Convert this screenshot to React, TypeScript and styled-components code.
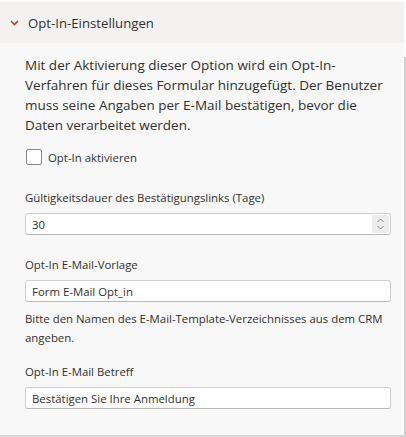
import React, { useState } from 'react';
import styled, { createGlobalStyle } from 'styled-components';

const GlobalStyle = createGlobalStyle`
  html, body {
    margin: 0;
    padding: 0;
    background: #ffffff;
  }
  body {
    font-family: "Open Sans", "Noto Sans", sans-serif;
    color: #323130;
  }
`;

const Panel = styled.div`
  width: 406px;
  height: 437px;
  padding-top: 2px;
  box-sizing: border-box;
  background: #fbfbfb;
  display: flex;
  flex-direction: column;
`;

const Header = styled.div`
  height: 41px;
  width: 404px;
  background: #f3f2f1;
  display: flex;
  align-items: center;
  padding-left: 10px;
  box-sizing: border-box;
  gap: 9px;
  font-size: 13.2px;
  color: #323130;
`;

const BodyRow = styled.div`
  flex: 1;
  display: flex;
  border-bottom: 2px solid #d6d6d6;
`;

const Body = styled.div`
  flex: 1;
  background: #f8f8f8;
  padding: 12px 12px 0 25px;
  display: flex;
  flex-direction: column;
`;

const ScrollTrack = styled.div`
  width: 4px;
  display: flex;
  flex-direction: column;
  padding-top: 14px;
  background: #fbfbfb;
`;

const ScrollThumb = styled.div`
  flex: 1;
  margin-left: 1px;
  background: #cfcfcf;
`;

const Description = styled.p`
  margin: 0;
  font-size: 13.5px;
  line-height: 20px;
  color: #323130;
`;

const DescLine = styled.span`
  display: block;
  white-space: nowrap;
`;

const CheckRow = styled.label`
  display: flex;
  align-items: center;
  gap: 6px;
  height: 20px;
  margin-top: 12px;
  font-size: 11.4px;
  cursor: pointer;
`;

const CheckBox = styled.span<{ $checked: boolean }>`
  width: 14px;
  height: 14px;
  border: 1px solid #8a8886;
  border-radius: 2px;
  background: ${(p) => (p.$checked ? '#0078d4' : '#ffffff')};
  margin-left: 1px;
`;

const Field = styled.div<{ $top: number }>`
  display: flex;
  flex-direction: column;
  margin-top: ${(p) => p.$top}px;
`;

const Label = styled.div`
  font-size: 11.4px;
  line-height: 18px;
  margin-bottom: 6px;
  color: #323130;
`;

const InputBox = styled.div`
  height: 22px;
  width: 366px;
  box-sizing: border-box;
  background: #ffffff;
  border: 1px solid #cfcfcf;
  border-bottom-color: #b8b8b8;
  border-radius: 3px;
  display: flex;
  align-items: center;
`;

const TextInput = styled.input`
  flex: 1;
  min-width: 0;
  border: none;
  outline: none;
  background: transparent;
  padding: 0 0 0 6px;
  font-family: inherit;
  font-size: 11.4px;
  color: #323130;
`;

const Spinner = styled.div`
  width: 17px;
  height: 18px;
  margin-right: 1px;
  background: #ededed;
  border-radius: 2px;
  display: flex;
  align-items: center;
  justify-content: center;
`;

const Helper = styled.div`
  margin-top: 7px;
  font-size: 11.4px;
  line-height: 19px;
  color: #323130;
`;

const Chevron = () => (
  <svg width="9" height="6" viewBox="0 0 9 6">
    <path d="M1 1 L4.5 4.5 L8 1" fill="none" stroke="#d13438" strokeWidth="1.6" />
  </svg>
);

const SpinIcon = () => (
  <svg width="9" height="14" viewBox="0 0 9 14">
    <path d="M1.5 5 L4.5 2 L7.5 5" fill="none" stroke="#8a8a8a" strokeWidth="1" />
    <path d="M1.5 9 L4.5 12 L7.5 9" fill="none" stroke="#8a8a8a" strokeWidth="1" />
  </svg>
);

const descLines = [
  'Mit der Aktivierung dieser Option wird ein Opt-In-',
  'Verfahren für dieses Formular hinzugefügt. Der Benutzer',
  'muss seine Angaben per E-Mail bestätigen, bevor die',
  'Daten verarbeitet werden.',
];

export default function App() {
  const [checked, setChecked] = useState(false);
  const [days, setDays] = useState('30');
  const [template, setTemplate] = useState('Form E-Mail Opt_in');
  const [subject, setSubject] = useState('Bestätigen Sie Ihre Anmeldung');

  return (
    <>
      <GlobalStyle />
      <Panel>
        <Header>
          <Chevron />
          <span>Opt-In-Einstellungen</span>
        </Header>
        <BodyRow>
          <Body>
            <Description>
              {descLines.map((line) => (
                <DescLine key={line}>{line}</DescLine>
              ))}
            </Description>
            <CheckRow onClick={() => setChecked(!checked)}>
              <CheckBox $checked={checked} />
              <span>Opt-In aktivieren</span>
            </CheckRow>
            <Field $top={22}>
              <Label>Gültigkeitsdauer des Bestätigungslinks (Tage)</Label>
              <InputBox>
                <TextInput value={days} onChange={(e) => setDays(e.target.value)} />
                <Spinner>
                  <SpinIcon />
                </Spinner>
              </InputBox>
            </Field>
            <Field $top={21}>
              <Label>Opt-In E-Mail-Vorlage</Label>
              <InputBox>
                <TextInput value={template} onChange={(e) => setTemplate(e.target.value)} />
              </InputBox>
              <Helper>
                Bitte den Namen des E-Mail-Template-Verzeichnisses aus dem CRM angeben.
              </Helper>
            </Field>
            <Field $top={16}>
              <Label>Opt-In E-Mail Betreff</Label>
              <InputBox>
                <TextInput value={subject} onChange={(e) => setSubject(e.target.value)} />
              </InputBox>
            </Field>
          </Body>
          <ScrollTrack>
            <ScrollThumb />
          </ScrollTrack>
        </BodyRow>
      </Panel>
    </>
  );
}
